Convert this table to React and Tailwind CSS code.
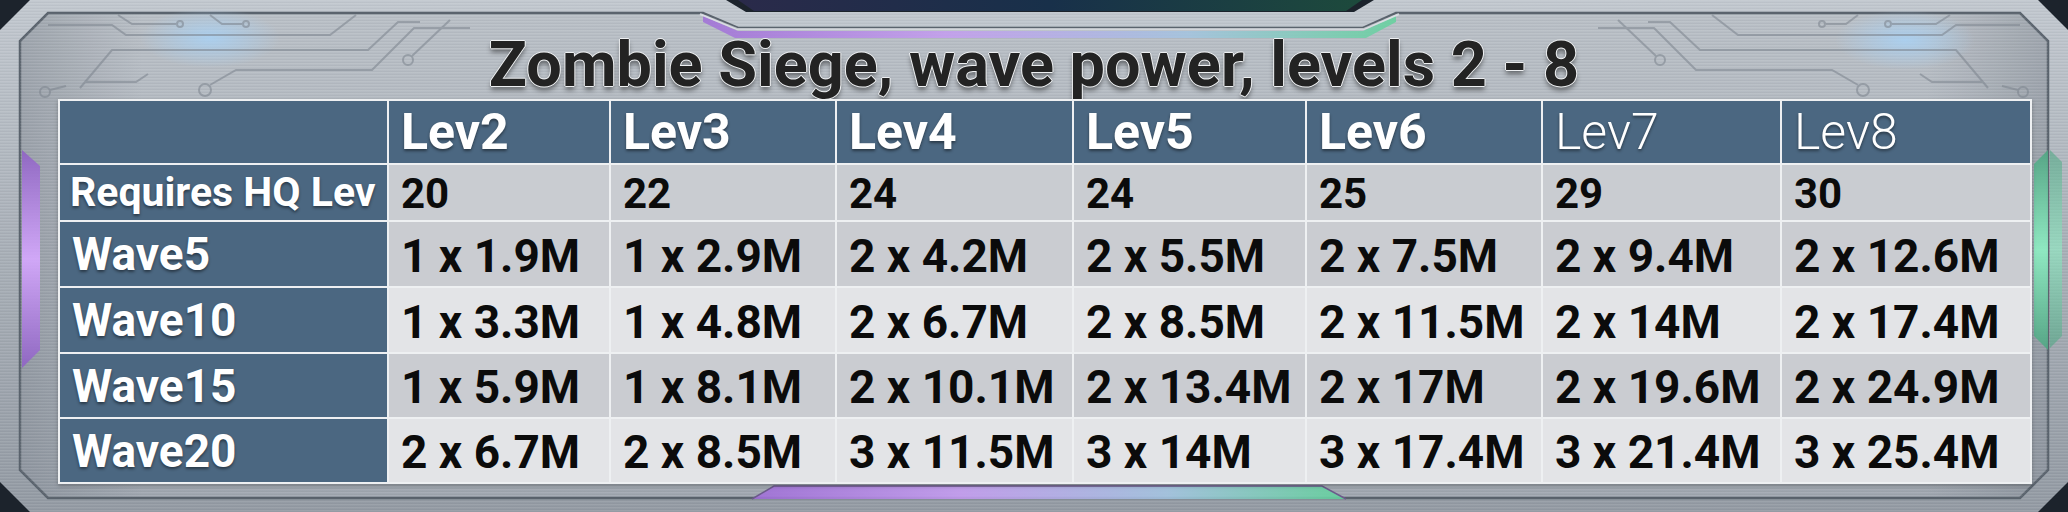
import React from "react";

const COLS = ["Lev2", "Lev3", "Lev4", "Lev5", "Lev6", "Lev7", "Lev8"];

const ROWS = [
  { label: "Wave5", values: ["1 x 1.9M", "1 x 2.9M", "2 x 4.2M", "2 x 5.5M", "2 x 7.5M", "2 x 9.4M", "2 x 12.6M"] },
  { label: "Wave10", values: ["1 x 3.3M", "1 x 4.8M", "2 x 6.7M", "2 x 8.5M", "2 x 11.5M", "2 x 14M", "2 x 17.4M"] },
  { label: "Wave15", values: ["1 x 5.9M", "1 x 8.1M", "2 x 10.1M", "2 x 13.4M", "2 x 17M", "2 x 19.6M", "2 x 24.9M"] },
  { label: "Wave20", values: ["2 x 6.7M", "2 x 8.5M", "3 x 11.5M", "3 x 14M", "3 x 17.4M", "3 x 21.4M", "3 x 25.4M"] },
];

const HQ = ["20", "22", "24", "24", "25", "29", "30"];

// circuit traces for the top corners
function Traces() {
  return (
    <g fill="none" stroke="#7b838d" strokeWidth="2" opacity="0.55">
      <polyline points="48,25 112,25 126,35 330,35 356,15" />
      <polyline points="118,15 132,24 176,24" />
      <circle cx="180" cy="24" r="3" />
      <polyline points="210,15 222,24 242,24" />
      <circle cx="246" cy="24" r="3" />
      <polyline points="80,88 112,50 368,50 398,22 420,22" />
      <circle cx="45" cy="92" r="5" />
      <polyline points="50,90 66,86" />
      <circle cx="205" cy="90" r="6" />
      <polyline points="210,85 236,70 372,70 414,28 470,28" />
      <circle cx="408" cy="60" r="5" />
      <polyline points="412,56 450,20" />
      <polyline points="86,82 136,82 148,74" />
    </g>
  );
}

function Frame() {
  return (
    <svg className="absolute inset-0" width="2068" height="512" viewBox="0 0 2068 512">
      <defs>
        <linearGradient id="rim" x1="0" y1="0" x2="0" y2="1">
          <stop offset="0" stopColor="#c2c8cf" />
          <stop offset="0.5" stopColor="#a8afb7" />
          <stop offset="1" stopColor="#949ba4" />
        </linearGradient>
        <linearGradient id="panel" x1="0" y1="0" x2="0" y2="1">
          <stop offset="0" stopColor="#b9bfc6" />
          <stop offset="0.5" stopColor="#aeb4bc" />
          <stop offset="1" stopColor="#a0a7b0" />
        </linearGradient>
        <linearGradient id="panelH" x1="0" y1="0" x2="1" y2="0">
          <stop offset="0" stopColor="#6d757f" stopOpacity="0.35" />
          <stop offset="0.06" stopColor="#6d757f" stopOpacity="0" />
          <stop offset="0.94" stopColor="#6d757f" stopOpacity="0" />
          <stop offset="1" stopColor="#6d757f" stopOpacity="0.35" />
        </linearGradient>
        <pattern id="brush" width="6" height="3" patternUnits="userSpaceOnUse">
          <rect width="6" height="1" fill="#ffffff" opacity="0.07" />
          <rect y="2" width="6" height="1" fill="#000000" opacity="0.03" />
        </pattern>
        <linearGradient id="glow" x1="0" y1="0" x2="1" y2="0">
          <stop offset="0" stopColor="#a06fd8" />
          <stop offset="0.35" stopColor="#c49cf0" />
          <stop offset="0.7" stopColor="#a3c4e0" />
          <stop offset="1" stopColor="#63d29c" />
        </linearGradient>
        <linearGradient id="tab" x1="0" y1="0" x2="1" y2="0">
          <stop offset="0" stopColor="#2a2a4a" />
          <stop offset="0.5" stopColor="#18304a" />
          <stop offset="1" stopColor="#1d4a3c" />
        </linearGradient>
        <linearGradient id="purple" x1="0" y1="0" x2="0" y2="1">
          <stop offset="0" stopColor="#8e62c4" />
          <stop offset="0.5" stopColor="#d6a8ff" />
          <stop offset="1" stopColor="#8e62c4" />
        </linearGradient>
        <linearGradient id="green" x1="0" y1="0" x2="0" y2="1">
          <stop offset="0" stopColor="#4fa582" />
          <stop offset="0.5" stopColor="#8ef0c4" />
          <stop offset="1" stopColor="#4fa582" />
        </linearGradient>
        <radialGradient id="blue">
          <stop offset="0" stopColor="#a9d2f5" stopOpacity="0.85" />
          <stop offset="1" stopColor="#a9d2f5" stopOpacity="0" />
        </radialGradient>
      </defs>

      <rect width="2068" height="512" fill="#1c232c" />
      <polygon
        points="30,0 726,0 746,12 1354,12 1374,0 2038,0 2068,30 2068,482 2038,512 30,512 0,482 0,30"
        fill="url(#rim)"
      />
      <polygon
        points="30,0 726,0 746,12 1354,12 1374,0 2038,0 2068,30 2068,482 2038,512 30,512 0,482 0,30"
        fill="url(#brush)"
      />
      <polygon points="738,0 1362,0 1346,11 754,11" fill="url(#tab)" />

      <polygon
        points="48,13 703,13 738,28 1363,28 1396,13 2020,13 2048,41 2048,470 2020,498 48,498 20,470 20,41"
        fill="url(#panel)"
        stroke="#5a636d"
        strokeWidth="2.5"
      />
      <polygon
        points="48,13 703,13 738,28 1363,28 1396,13 2020,13 2048,41 2048,470 2020,498 48,498 20,470 20,41"
        fill="url(#panelH)"
      />
      <polygon
        points="48,13 703,13 738,28 1363,28 1396,13 2020,13 2048,41 2048,470 2020,498 48,498 20,470 20,41"
        fill="url(#brush)"
      />

      <polygon points="703,16 738,31 1363,31 1396,16 1396,22 1366,38 735,38 703,22" fill="url(#glow)" opacity="0.85" />
      <polyline points="700,14 737,29 1364,29 1399,14" fill="none" stroke="#e9edf1" strokeWidth="2" opacity="0.7" />

      <polygon points="752,499 774,486 1322,486 1346,499" fill="url(#glow)" opacity="0.9" />
      <polyline points="752,499 774,486 1322,486 1346,499" fill="none" stroke="#6c5a8c" strokeWidth="1.5" />

      <polygon points="22,150 40,166 40,350 22,368" fill="url(#purple)" opacity="0.9" />
      <polygon points="2048,150 2034,164 2034,336 2048,350" fill="url(#green)" opacity="0.9" />
      <polygon points="2050,150 2062,162 2062,336 2050,348" fill="url(#green)" opacity="0.6" />

      <ellipse cx="210" cy="38" rx="70" ry="30" fill="url(#blue)" />
      <ellipse cx="1905" cy="40" rx="70" ry="30" fill="url(#blue)" />

      <Traces />
      <g transform="translate(2068,0) scale(-1,1)">
        <Traces />
      </g>
    </svg>
  );
}

const roboto = "font-['Roboto','Liberation_Sans',sans-serif]";
const headShadow = "[text-shadow:0_2px_3px_rgba(0,0,0,0.45)]";

function HeadCell({ children, light, size = "text-[50px]", pl = "pl-3" }) {
  return (
    <div
      className={`flex items-center bg-[#4b6781] ${pl} ${size} leading-none text-white ${headShadow} ${
        light ? "font-light" : "font-bold"
      }`}
    >
      {children}
    </div>
  );
}

function DataCell({ children, bg, size = "text-[46px]" }) {
  return (
    <div className={`flex items-center ${bg} pl-3 pt-[3px] ${size} font-bold leading-none text-[#0b0b0b]`}>
      {children}
    </div>
  );
}

export default function App() {
  return (
    <div className={`relative h-[512px] w-[2068px] overflow-hidden ${roboto}`}>
      <Frame />
      <div className="relative flex flex-col">
        <h1
          className="mt-[33px] text-center text-[63px] font-bold leading-[63px] text-[#232323] [text-shadow:0_1px_0_#eef0f2,0_-1px_0_#eef0f2,1px_0_0_#eef0f2,-1px_0_0_#eef0f2,0_4px_5px_rgba(0,0,0,0.45)]"
        >
          Zombie Siege, wave power, levels 2 - 8
        </h1>
        <div className="ml-[58px] mt-[3px] grid w-[1974px] grid-cols-[327px_220px_224px_235px_231px_234px_237px_248px] grid-rows-[62px_55px_64px_64px_63px_63px] gap-[2px] bg-[#eef0f2] p-[2px] shadow-[0_2px_4px_rgba(0,0,0,0.25)]">
          <div className="bg-[#4b6781]" />
          {COLS.map((c, i) => (
            <HeadCell key={c} light={i >= 5}>
              {c}
            </HeadCell>
          ))}

          <HeadCell size="text-[41px]" pl="pl-[10px]">
            Requires HQ Lev
          </HeadCell>
          {HQ.map((v, i) => (
            <DataCell key={i} bg="bg-[#c9ccd1]" size="text-[42px]">
              {v}
            </DataCell>
          ))}

          {ROWS.map((r, ri) => (
            <React.Fragment key={r.label}>
              <HeadCell size="text-[46px]">{r.label}</HeadCell>
              {r.values.map((v, i) => (
                <DataCell key={i} bg={ri % 2 === 0 ? "bg-[#caccd1]" : "bg-[#e3e4e7]"}>
                  {v}
                </DataCell>
              ))}
            </React.Fragment>
          ))}
        </div>
      </div>
    </div>
  );
}
